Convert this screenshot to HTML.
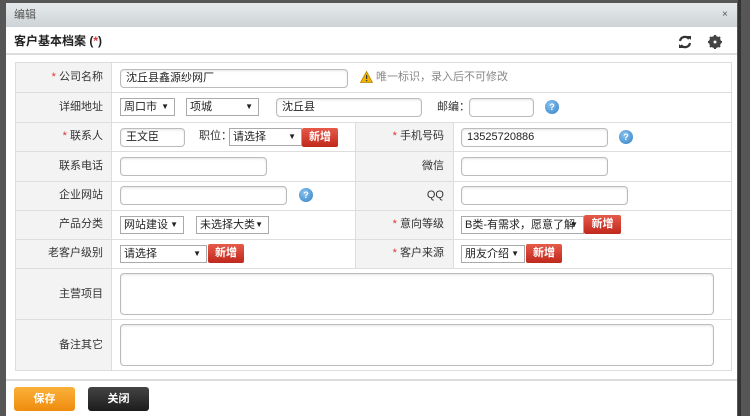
<!DOCTYPE html>
<html><head><meta charset="utf-8"><style>
*{box-sizing:border-box;margin:0;padding:0}
body{width:750px;height:416px;overflow:hidden;background:#565656;font-family:"Liberation Sans","Noto Sans CJK SC",sans-serif;font-size:11px;line-height:13px;color:#333;position:relative}
.a{position:absolute}
#dlg{left:6px;top:3px;width:731px;height:413px;background:#fff}
.tb{left:6px;top:3px;width:731px;height:24px;background:linear-gradient(#e6eaec,#cdd3d6);color:#555;font-size:11px;padding:6px 0 0 8px}
.hd{left:6px;top:27px;width:731px;height:28px;border-bottom:2px solid #ddd;font-weight:bold;font-size:12px;color:#222;padding:8px 0 0 8px}
.lab{background:#f3f3f3}
.line{background:#ddd}
.in{border:1px solid #bbb;border-radius:4px;background:#fff;height:19px;padding:2px 5px;font-size:11px;line-height:13px;color:#222;box-shadow:inset 0 1px 2px #e5e5e5}
.sel{border:1px solid #aaa;background:#fff;height:18px;padding:1px 3px;font-size:11px;line-height:14px;color:#222}
.sel:after{content:"▼";position:absolute;right:5px;top:2px;font-size:8px;line-height:12px}
.btn{background:linear-gradient(#e65a4a,#c0281c);color:#fff;font-weight:bold;border-radius:2px;text-align:center;height:19px;padding-top:2px;font-size:11px;line-height:14px}
.q{width:14px;height:14px;border-radius:50%;background:radial-gradient(circle at 40% 35%,#8cc4ee,#2f7fc6);color:#fff;font-size:9px;text-align:center;line-height:14px;font-weight:bold}
.star{color:#d33}
.l{width:87px;text-align:right}
.r{width:88px;text-align:right}
</style></head><body>
<div class="a" style="left:738px;top:0;width:3px;height:416px;background:#333"></div>
<div id="dlg" class="a"></div>
<div class="a tb">编辑<span class="a" style="left:716px;top:5px;font-size:10px">×</span></div>
<div class="a hd">客户基本档案 (<span class="star">*</span>)</div>
<svg class="a" style="left:678px;top:35px" width="14" height="14" viewBox="0 0 14 14"><path d="M2 6A5 5 0 0 1 11 4M12 8A5 5 0 0 1 3 10" fill="none" stroke="#333" stroke-width="2.2"/><path d="M9 1l4 0 0 4z M5 13l-4 0 0-4z" fill="#333"/></svg>
<svg class="a" style="left:708px;top:35px" width="14" height="14" viewBox="0 0 14 14"><circle cx="7" cy="7" r="4.5" fill="none" stroke="#444" stroke-width="3"/><path d="M7 0v14M0 7h14M2 2l10 10M12 2L2 12" stroke="#444" stroke-width="2.2"/><circle cx="7" cy="7" r="1.5" fill="#fff"/></svg>

<div class="a" style="left:15px;top:62px;width:717px;height:309px;border:1px solid #ddd"></div>
<div class="a lab" style="left:16px;top:63px;width:95px;height:307px"></div>
<div class="a lab" style="left:356px;top:123px;width:97px;height:145px"></div>
<div class="a line" style="left:111px;top:62px;width:1px;height:309px"></div>
<div class="a line" style="left:355px;top:122px;width:1px;height:146px"></div>
<div class="a line" style="left:453px;top:122px;width:1px;height:146px"></div>
<div class="a line" style="left:15px;top:92px;width:717px;height:1px"></div>
<div class="a line" style="left:15px;top:122px;width:717px;height:1px"></div>
<div class="a line" style="left:15px;top:151px;width:717px;height:1px"></div>
<div class="a line" style="left:15px;top:181px;width:717px;height:1px"></div>
<div class="a line" style="left:15px;top:210px;width:717px;height:1px"></div>
<div class="a line" style="left:15px;top:239px;width:717px;height:1px"></div>
<div class="a line" style="left:15px;top:268px;width:717px;height:1px"></div>
<div class="a line" style="left:15px;top:319px;width:717px;height:1px"></div>

<div class="a l" style="left:16px;top:71px"><span class="star">* </span>公司名称</div>
<div class="a l" style="left:16px;top:101px">详细地址</div>
<div class="a l" style="left:16px;top:130px"><span class="star">* </span>联系人</div>
<div class="a l" style="left:16px;top:160px">联系电话</div>
<div class="a l" style="left:16px;top:189px">企业网站</div>
<div class="a l" style="left:16px;top:218px">产品分类</div>
<div class="a l" style="left:16px;top:247px">老客户级别</div>
<div class="a l" style="left:16px;top:288px">主营项目</div>
<div class="a l" style="left:16px;top:339px">备注其它</div>
<div class="a r" style="left:356px;top:130px"><span class="star">* </span>手机号码</div>
<div class="a r" style="left:356px;top:160px">微信</div>
<div class="a r" style="left:356px;top:189px">QQ</div>
<div class="a r" style="left:356px;top:218px"><span class="star">* </span>意向等级</div>
<div class="a r" style="left:356px;top:247px"><span class="star">* </span>客户来源</div>

<div class="a in" style="left:120px;top:69px;width:228px">沈丘县鑫源纱网厂</div>
<svg class="a" style="left:360px;top:71px" width="13" height="12" viewBox="0 0 13 12"><path d="M6.5 0.5L12.5 11.5H0.5Z" fill="#f0b400" stroke="#b88400" stroke-width="0.8"/><rect x="6" y="4" width="1.2" height="4" fill="#333"/><rect x="6" y="9" width="1.2" height="1.2" fill="#333"/></svg>
<div class="a" style="left:376px;top:71px;color:#888">唯一标识，录入后不可修改</div>
<div class="a sel" style="left:120px;top:98px;width:55px">周口市</div>
<div class="a sel" style="left:186px;top:98px;width:73px">项城</div>
<div class="a in" style="left:276px;top:98px;width:146px">沈丘县</div>
<div class="a" style="left:437px;top:101px">邮编：</div>
<div class="a in" style="left:469px;top:98px;width:65px"></div>
<div class="a q" style="left:545px;top:100px">?</div>
<div class="a in" style="left:120px;top:128px;width:65px">王文臣</div>
<div class="a" style="left:199px;top:130px">职位：</div>
<div class="a sel" style="left:229px;top:128px;width:73px">请选择</div>
<div class="a btn" style="left:302px;top:128px;width:36px">新增</div>
<div class="a in" style="left:461px;top:128px;width:147px">13525720886</div>
<div class="a q" style="left:619px;top:130px">?</div>
<div class="a in" style="left:120px;top:157px;width:147px"></div>
<div class="a in" style="left:461px;top:157px;width:147px"></div>
<div class="a in" style="left:120px;top:186px;width:167px"></div>
<div class="a q" style="left:299px;top:188px">?</div>
<div class="a in" style="left:461px;top:186px;width:167px"></div>
<div class="a sel" style="left:120px;top:216px;width:64px">网站建设</div>
<div class="a sel" style="left:196px;top:216px;width:73px">未选择大类</div>
<div class="a sel" style="left:461px;top:216px;width:123px">B类-有需求，愿意了解</div>
<div class="a btn" style="left:584px;top:215px;width:37px">新增</div>
<div class="a sel" style="left:120px;top:245px;width:87px">请选择</div>
<div class="a btn" style="left:208px;top:244px;width:36px">新增</div>
<div class="a sel" style="left:461px;top:245px;width:64px">朋友介绍</div>
<div class="a btn" style="left:526px;top:244px;width:36px">新增</div>
<div class="a in" style="left:120px;top:273px;width:594px;height:42px"></div>
<div class="a in" style="left:120px;top:324px;width:594px;height:42px"></div>

<div class="a" style="left:6px;top:379px;width:731px;height:2px;background:#ddd"></div>
<div class="a" style="left:14px;top:387px;width:61px;height:24px;border-radius:3px;background:linear-gradient(#fbb13a,#ef8c0e);color:#fff;font-weight:bold;text-align:center;padding-top:6px">保存</div>
<div class="a" style="left:88px;top:387px;width:61px;height:24px;border-radius:3px;background:linear-gradient(#444,#1c1c1c);color:#fff;font-weight:bold;text-align:center;padding-top:6px">关闭</div>
</body></html>
